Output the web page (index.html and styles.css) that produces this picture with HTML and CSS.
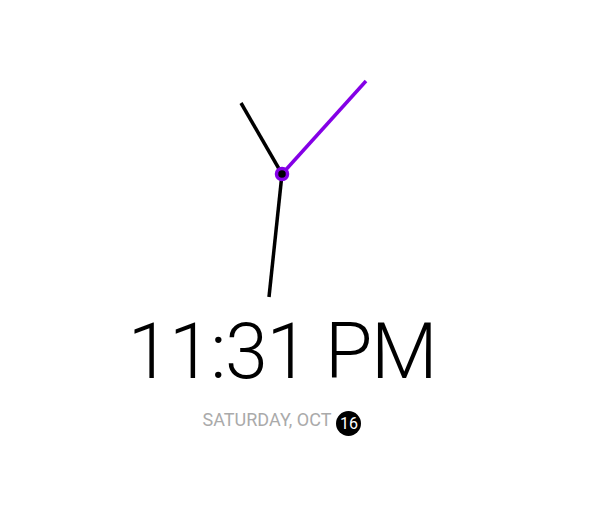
FILE: index.html
```html
<!DOCTYPE html>
<html>
<head>
<meta charset="utf-8">
<link rel="stylesheet" href="styles.css">
</head>
<body>
<div class="clock-app">
  <svg class="dial" width="250" height="250" viewBox="0 0 250 250">
    <line x1="125" y1="125" x2="84" y2="54" class="hand" />
    <line x1="125" y1="125" x2="112" y2="248" class="hand" />
    <line x1="125" y1="125" x2="209" y2="32" class="hand second" />
    <circle cx="125" cy="125" r="5.5" class="pivot" />
  </svg>
  <div class="time">11:31 PM</div>
  <div class="date"><span class="label">SATURDAY, OCT</span><span class="day">16</span></div>
</div>
</body>
</html>
```
FILE: styles.css
```css
html, body {
  margin: 0;
  padding: 0;
  background: #fff;
}
body {
  font-family: Roboto, "Liberation Sans", sans-serif;
}
.clock-app {
  width: 564px;
  display: flex;
  flex-direction: column;
  align-items: center;
  padding-top: 49px;
}
.dial {
  display: block;
}
.hand {
  stroke: #000;
  stroke-width: 3.5;
  stroke-linecap: butt;
}
.hand.second {
  stroke: #8400e6;
}
.pivot {
  fill: #000;
  stroke: #8400e6;
  stroke-width: 3.5;
}
.time {
  margin-top: 15px;
  font-size: 77px;
  line-height: 1;
  font-weight: 300;
  letter-spacing: -1.4px;
  color: #000;
}
.date {
  margin-top: 16px;
  font-size: 18px;
  line-height: 26px;
  color: #aaa;
  display: flex;
  align-items: flex-start;
  gap: 5px;
}
.day {
  margin-top: 4px;
  display: flex;
  align-items: center;
  justify-content: center;
  width: 25px;
  height: 25px;
  border-radius: 50%;
  background: #000;
  color: #fff;
  font-size: 16px;
  line-height: 1;
}
```
